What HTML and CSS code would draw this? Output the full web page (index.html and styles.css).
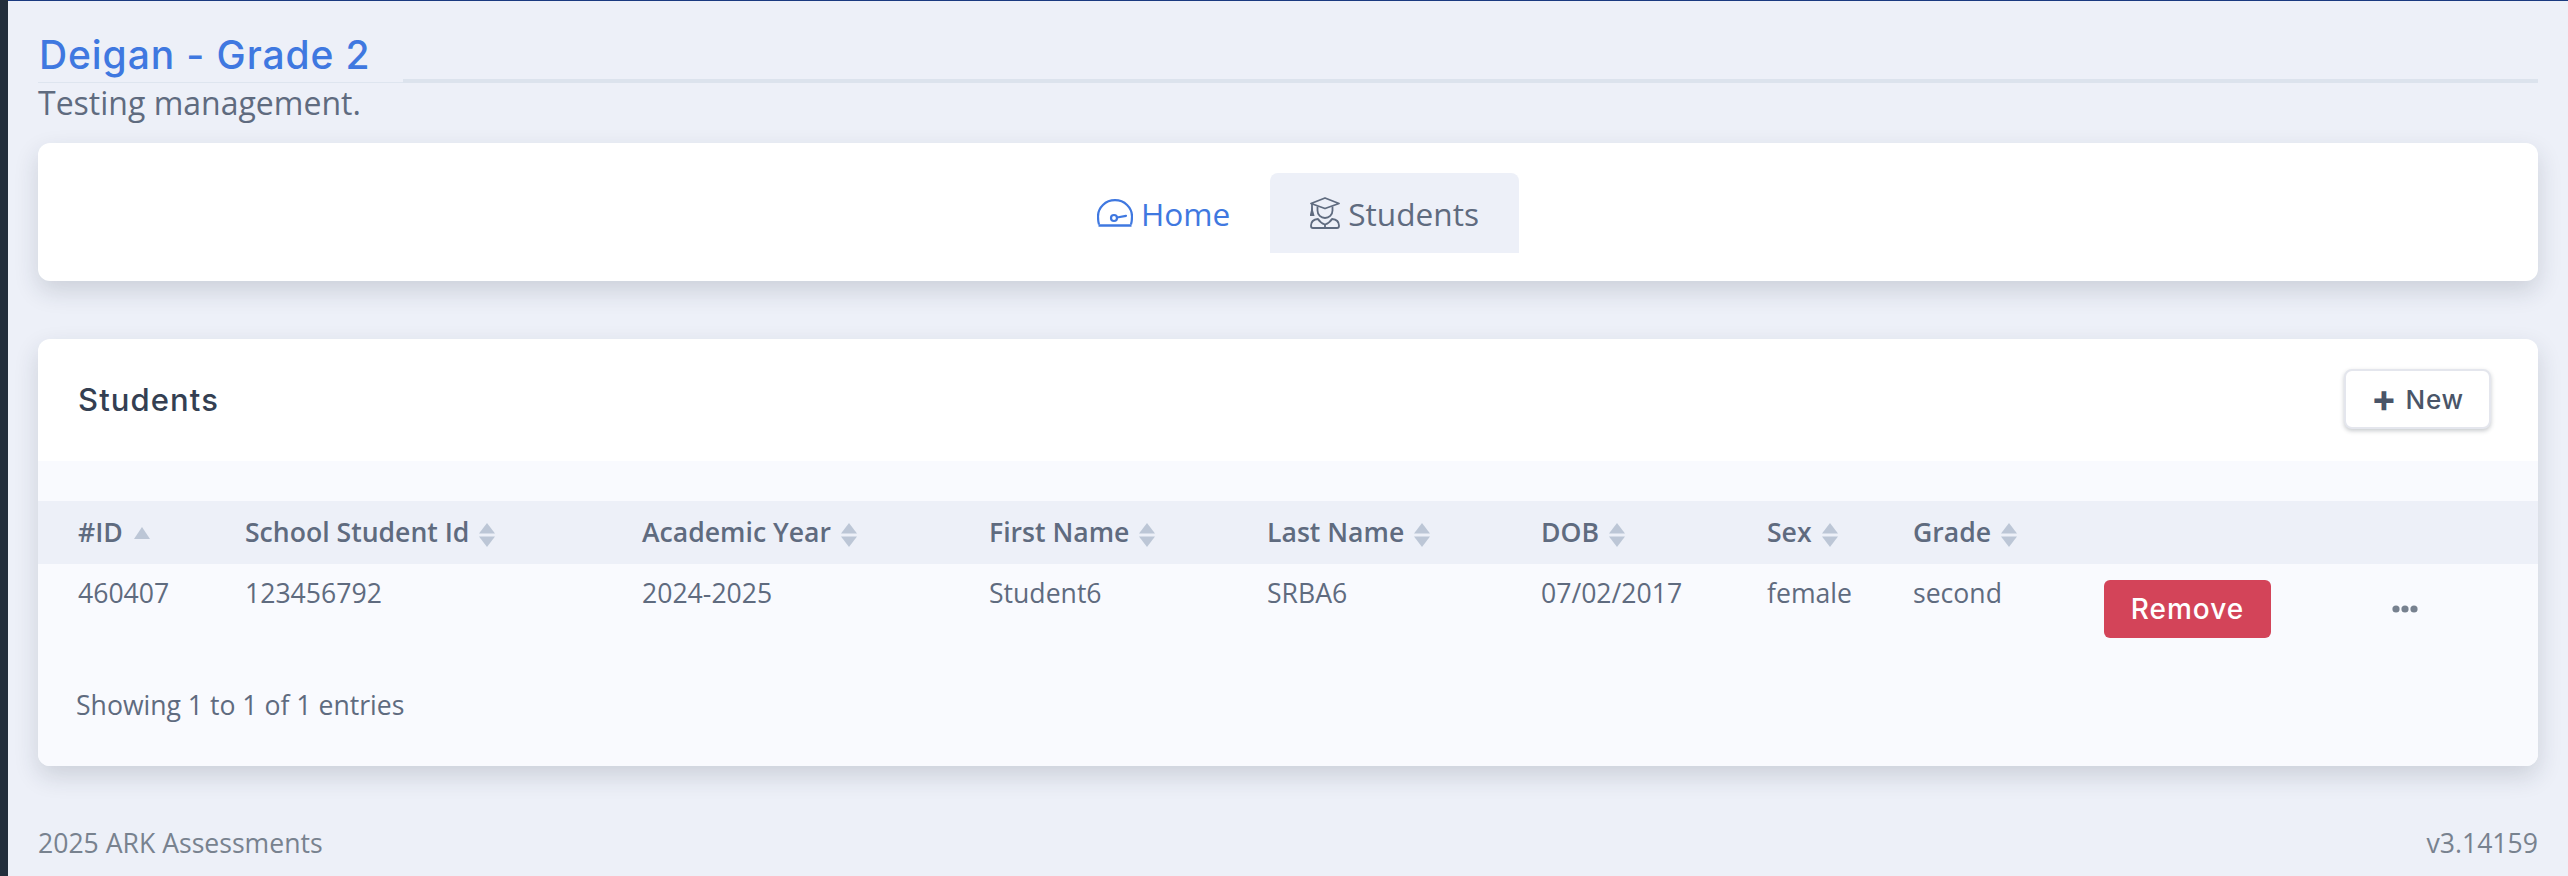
FILE: index.html
```html
<!DOCTYPE html>
<html lang="en">
<head>
	<meta charset="UTF-8" />
	<title>Deigan - Grade 2</title>
	<link rel="stylesheet" href="styles.css">
</head>
<body>
	<svg class="defs" width="0" height="0">
		<symbol id="sort" viewBox="0 0 16 24">
			<path d="M8 0 16 10.500H0Z" />
			<path d="M0 13.500H16L8 24Z" />
		</symbol>
	</svg>
	<div class="sidebar"></div>
	<div class="main">
		<div class="title-row">
			<h1>Deigan - Grade 2</h1>
			<div class="title-rule"></div>
		</div>
		<p class="subtitle">Testing management.</p>

		<nav class="card tabs">
			<a class="tab tab-active-page">
				<svg class="tab-icon" width="36" height="28" viewBox="0 0 36 28" fill="none" stroke="currentColor" stroke-width="2.2">
					<path d="M2 25.5C1 22 1 20 1 17.500C1 8.500 8.500 1.200 18 1.200S35 8.500 35 17.500C35 20 35 22 34 25.500" />
					<path d="M1.500 26.500H34.500" stroke-width="2.600" />
					<circle cx="17" cy="19" r="3" />
					<path d="M20 18.500 29 16.800" stroke-linecap="round" />
				</svg>
				Home
			</a>
			<a class="tab tab-current">
				<svg class="tab-icon" width="30" height="32" viewBox="0 0 30 32" fill="none" stroke="currentColor" stroke-width="1.800">
					<path d="M15 1 29 6.500 15 11.500 1 6.500Z" stroke-linejoin="round" />
					<path d="M2 7V15" />
					<path d="M2 13 .8 18H3.400Z" fill="currentColor" />
					<path d="M7.500 9.500V13.500C7.500 18 11 21 15 21S22.500 18 22.500 13.500V9.500" />
					<path d="M8 22C3.500 22.500 1 25 1 28.500V29C1 30.200 1.800 31 3 31H27C28.200 31 29 30.200 29 29V28.500C29 25 26.500 22.500 22 22C20.500 24.500 18 26.500 15 27.500C12 26.500 9.500 24.500 8 22Z" stroke-linejoin="round" />
					<path d="M15 27.500V31" />
				</svg>
				Students
			</a>
		</nav>

		<section class="card students">
			<div class="students-head">
				<h2>Students</h2>
				<button class="btn-new"><span class="plus">+</span> New</button>
			</div>
			<div class="students-body">
				<table class="students-table">
					<colgroup>
						<col class="col-id"><col class="col-school"><col class="col-year"><col class="col-first"><col class="col-last">
						<col class="col-dob"><col class="col-sex"><col class="col-grade"><col class="col-remove"><col class="col-more">
					</colgroup>
					<thead>
						<tr>
							<th>#ID <svg class="sort-asc" width="16" height="12" viewBox="0 0 16 12"><path d="M8 0 16 12H0Z" /></svg></th>
							<th>School Student Id <svg class="sort" width="16" height="24"><use href="#sort" /></svg></th>
							<th>Academic Year <svg class="sort" width="16" height="24"><use href="#sort" /></svg></th>
							<th>First Name <svg class="sort" width="16" height="24"><use href="#sort" /></svg></th>
							<th>Last Name <svg class="sort" width="16" height="24"><use href="#sort" /></svg></th>
							<th>DOB <svg class="sort" width="16" height="24"><use href="#sort" /></svg></th>
							<th>Sex <svg class="sort" width="16" height="24"><use href="#sort" /></svg></th>
							<th>Grade <svg class="sort" width="16" height="24"><use href="#sort" /></svg></th>
							<th></th>
							<th></th>
						</tr>
					</thead>
					<tbody>
						<tr>
							<td>460407</td>
							<td>123456792</td>
							<td>2024-2025</td>
							<td>Student6</td>
							<td>SRBA6</td>
							<td>07/02/2017</td>
							<td>female</td>
							<td>second</td>
							<td><button class="btn-remove">Remove</button></td>
							<td>
								<svg class="more" width="26" height="8" viewBox="0 0 26 8"><circle cx="4" cy="4" r="3.600" /><circle cx="13" cy="4" r="3.600" /><circle cx="22" cy="4" r="3.600" /></svg>
							</td>
						</tr>
					</tbody>
				</table>
				<div class="entries">Showing 1 to 1 of 1 entries</div>
			</div>
		</section>

		<footer class="footer">
			<span>2025 ARK Assessments</span>
			<span>v3.14159</span>
		</footer>
	</div>
</body>
</html>
```

FILE: styles.css
```css
* {
	box-sizing: border-box;
}
html, body {
	height: 100%;
}
body {
	margin: 0;
	display: flex;
	background-color: #edf0f8;
	color: #5f6b7f;
	font-family: "Open Sans", Arial, sans-serif;
	font-size: 26.6px;
	overflow: hidden;
}
.defs {
	position: absolute;
}
.sidebar {
	width: 8px;
	flex: none;
	background-color: #222e3c;
}
.main {
	flex: 1;
	min-width: 0;
	padding: 0 30px;
	border-top: 1px solid #1a3a80;
}

.title-row {
	display: flex;
	align-items: flex-end;
	height: 82px;
}
h1 {
	width: 365px;
	height: 82px;
	margin: 0;
	padding: 31px 0 0 1px;
	border-bottom: 1px solid #dee5ef;
	font-family: Inter, Arial, sans-serif;
	font-size: 39px;
	line-height: 46px;
	letter-spacing: 0.9px;
	font-weight: 500;
	color: #3f78e0;
	white-space: nowrap;
}
.title-rule {
	flex: 1;
	height: 4px;
	background-color: #dce3ed;
}
.subtitle {
	height: 60px;
	margin: 0;
	font-size: 32px;
	line-height: 40px;
}

.card {
	border-radius: 12px;
	box-shadow: 0 10px 24px rgba(34, 46, 60, 0.16);
	background-color: #fff;
}
.tabs {
	display: flex;
	justify-content: center;
	align-items: center;
	height: 138px;
	padding-top: 2px;
}
.tab {
	display: flex;
	align-items: center;
	gap: 8px;
	height: 80px;
	padding: 0 40px;
	border-radius: 8px 8px 0 0;
	font-size: 31.600px;
}
.tab-active-page {
	color: #3f78e0;
}
.tab-current {
	background-color: #edf0f8;
	color: #5f6b7f;
}

.students {
	margin-top: 58px;
	overflow: hidden;
}
.students-head {
	display: flex;
	justify-content: space-between;
	align-items: center;
	height: 122px;
	padding: 0 47px 2px 40px;
}
h2 {
	margin: 0;
	font-family: Inter, Arial, sans-serif;
	font-size: 31px;
	letter-spacing: 1.100px;
	font-weight: 500;
	color: #343f52;
}
.btn-new {
	width: 147px;
	height: 60px;
	padding: 0;
	border: 2px solid #e4e6ed;
	border-radius: 8px;
	background-color: #fff;
	box-shadow: 0 2px 4px rgba(34, 46, 60, 0.25);
	font-family: Inter, Arial, sans-serif;
	font-size: 26px;
	letter-spacing: 0.8px;
	font-weight: 500;
	color: #4a5568;
}
.plus {
	font-size: 38px;
	font-weight: 700;
	line-height: 20px;
	vertical-align: -3px;
}

.students-body {
	height: 305px;
	padding-top: 40px;
	background-color: #f9fafe;
}
.students-table {
	width: 100%;
	table-layout: fixed;
	border-collapse: collapse;
}
.col-id { width: 207px; }
.col-school { width: 397px; }
.col-year { width: 347px; }
.col-first { width: 278px; }
.col-last { width: 274px; }
.col-dob { width: 226px; }
.col-sex { width: 146px; }
.col-grade { width: 191px; }
.col-remove { width: 288px; }
.students-table th, .students-table td {
	padding: 0;
	text-align: left;
	white-space: nowrap;
}
.students-table th:first-child, .students-table td:first-child {
	padding-left: 40px;
}
.students-table th {
	height: 63px;
	padding-bottom: 2px;
	background-color: #edf0f8;
	font-weight: 600;
	vertical-align: middle;
}
.students-table td {
	height: 91px;
	padding-top: 11px;
	vertical-align: top;
	line-height: 36px;
}
.sort {
	margin-left: 3px;
	fill: #bcc6d6;
	vertical-align: -5px;
}
.sort-asc {
	fill: #bcc6d6;
	margin-left: 4px;
	vertical-align: 3px;
}
.btn-remove {
	width: 167px;
	height: 58px;
	margin-top: 5px;
	border: none;
	border-radius: 6px;
	background-color: #d34459;
	font-family: Inter, Arial, sans-serif;
	font-size: 28px;
	letter-spacing: 1px;
	font-weight: 500;
	color: #fff;
}
.more {
	display: block;
	margin: 30px 0 0;
	fill: #77818f;
}
.entries {
	padding: 32px 0 0 38px;
	line-height: 36px;
}

.footer {
	display: flex;
	justify-content: space-between;
	margin-top: 59px;
	color: #78828f;
	line-height: 36px;
}
```
